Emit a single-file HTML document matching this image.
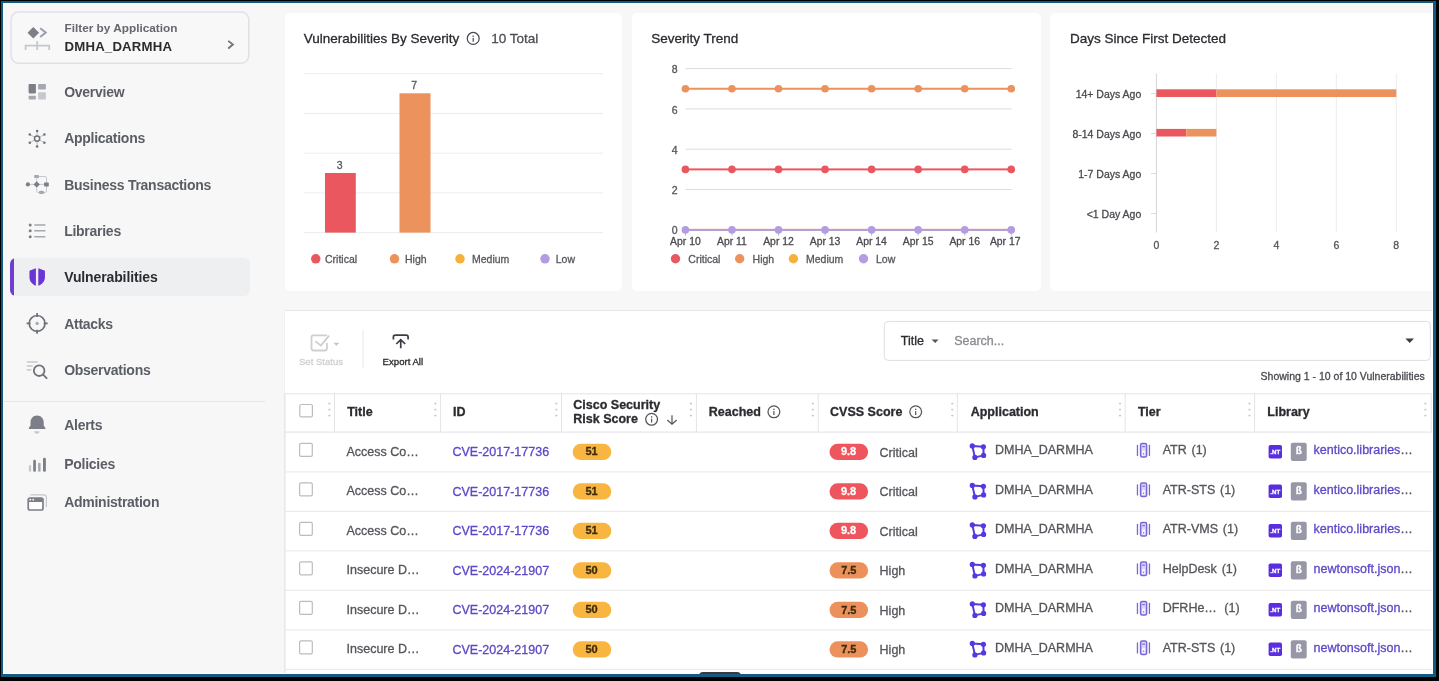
<!DOCTYPE html>
<html>
<head>
<meta charset="utf-8">
<title>Vulnerabilities</title>
<style>
*{box-sizing:border-box;margin:0;padding:0}
html,body{width:1439px;height:681px;overflow:hidden;background:#f7f7f7;font-family:"Liberation Sans",sans-serif;color:#2b2b30}
.abs{position:absolute}
#root{position:absolute;left:0;top:0;width:1439px;height:681px;overflow:hidden;will-change:transform}
/* frame */
.fr{position:absolute;z-index:50}
/* sidebar */
.filter{position:absolute;left:11px;top:12px;width:238px;height:51px;border-radius:8px;background:#f8f8f8}
.filter .l1{position:absolute;left:53.5px;top:10.4px;font-size:11.8px;font-weight:bold;color:#66666c;white-space:nowrap;line-height:13px}
.filter .l2{position:absolute;left:53.5px;top:26.8px;font-size:13.2px;letter-spacing:0.2px;font-weight:bold;color:#2b2b30;white-space:nowrap;line-height:16px}
.nav{position:absolute;left:64.2px;font-size:14px;font-weight:bold;color:#5b5e65;white-space:nowrap;line-height:16px;letter-spacing:-0.27px}
.nav.act{color:#2b2b30;letter-spacing:-0.12px}
.navbg{position:absolute;left:10px;top:258px;width:240px;height:38px;background:#eeeff1;border-radius:6px;overflow:hidden}
.navbg i{position:absolute;left:0;top:0;width:4px;height:100%;background:#6f3fd0}
.sep{position:absolute;left:3px;top:400.5px;width:262px;height:1px;background:#e6e6e8}
.ico{position:absolute}
/* cards */
.card{position:absolute;top:13px;height:278px;background:#fff;border-radius:5px}
.ctitle{position:absolute;top:31px;font-size:13.5px;color:#2b2b30;white-space:nowrap;line-height:16px}
.t105{font-size:10.5px;color:#55555a;white-space:nowrap;line-height:12px;position:absolute}
.dot{position:absolute;width:9.5px;height:9.5px;border-radius:50%}
svg text{stroke-width:0.3px}
</style>
</head>
<body>
<div id="root">

<!-- SIDEBAR -->
<div class="filter">
  <div class="l1">Filter by Application</div>
  <div class="l2">DMHA_DARMHA</div>
</div>
<div class="navbg"><i></i></div>
<div class="nav" style="top:84.15px">Overview</div>
<div class="nav" style="top:130.45px">Applications</div>
<div class="nav" style="top:176.75px">Business Transactions</div>
<div class="nav" style="top:223.05px">Libraries</div>
<div class="nav act" style="top:269.35px">Vulnerabilities</div>
<div class="nav" style="top:315.65px">Attacks</div>
<div class="nav" style="top:361.95px">Observations</div>
<div class="sep"></div>
<div class="nav" style="top:417.35px">Alerts</div>
<div class="nav" style="top:455.85px">Policies</div>
<div class="nav" style="top:494.35px">Administration</div>

<!-- SIDEBAR ICONS -->
<svg class="abs" style="left:0;top:0" width="270" height="681" viewBox="0 0 270 681">
<rect x="11.05" y="12.05" width="237.7" height="51.2" rx="7.5" fill="none" stroke="#e1e1e4" stroke-width="1.5"/>
<path d="M33.3 26.9l5.8 5.8-5.8 5.8-5.8-5.8z" fill="#7c7f88"/>
<path d="M40.2 28.2l5.5 4.3-5.5 4.5" fill="none" stroke="#9c9ea6" stroke-width="2"/>
<path d="M25.6 50v-4.4h23.6V50M37.2 41.2V50" fill="none" stroke="#c6c8cd" stroke-width="1.8"/>
<path d="M228.2 40.9l4.7 3.6-4.7 4" fill="none" stroke="#70737c" stroke-width="1.8"/>
<rect x="28.6" y="84" width="7.3" height="9.4" rx="0.8" fill="#7c7f88"/><rect x="38.1" y="84" width="7.8" height="5.6" rx="0.8" fill="#a6a8b0"/><rect x="28.6" y="95.8" width="7.3" height="3.8" rx="0.8" fill="#a6a8b0"/><rect x="38.1" y="92.3" width="7.8" height="7.3" rx="0.8" fill="#c6c8cd"/>
<line x1="37.1" y1="138.6" x2="37.1" y2="130.9" stroke="#b4b6bc" stroke-width="0.9"/><line x1="37.1" y1="138.6" x2="44.4" y2="134.5" stroke="#b4b6bc" stroke-width="0.9"/><line x1="37.1" y1="138.6" x2="44.4" y2="142.7" stroke="#b4b6bc" stroke-width="0.9"/><line x1="37.1" y1="138.6" x2="37.1" y2="146.4" stroke="#b4b6bc" stroke-width="0.9"/><line x1="37.1" y1="138.6" x2="29.8" y2="142.7" stroke="#b4b6bc" stroke-width="0.9"/><line x1="37.1" y1="138.6" x2="29.8" y2="134.5" stroke="#b4b6bc" stroke-width="0.9"/><circle cx="37.1" cy="138.6" r="2.6" fill="#f7f7f7" stroke="#6e717a" stroke-width="1.5"/><circle cx="37.1" cy="130.9" r="1.25" fill="#6e717a"/><circle cx="44.4" cy="134.5" r="1.25" fill="#6e717a"/><circle cx="44.4" cy="142.7" r="1.25" fill="#6e717a"/><circle cx="37.1" cy="146.4" r="1.25" fill="#6e717a"/><circle cx="29.8" cy="142.7" r="1.25" fill="#6e717a"/><circle cx="29.8" cy="134.5" r="1.25" fill="#6e717a"/>
<path d="M38.8 176.5h6.2a1.5 1.5 0 0 1 1.5 1.5v13a1.5 1.5 0 0 1-1.5 1.5h-6.8a1.5 1.5 0 0 1-1.5-1.5v-13.5M28 184.4h18" fill="none" stroke="#c6c8cd" stroke-width="1"/><circle cx="27.9" cy="184.4" r="2.1" fill="#7c7f88"/><path d="M36.7 181.2l3.2 3.2-3.2 3.2-3.2-3.2z" fill="#7c7f88"/><rect x="44.1" y="182.4" width="4.7" height="4" rx="0.6" fill="#7c7f88"/><rect x="34.2" y="174.9" width="4.7" height="3.2" rx="0.6" fill="#a6a8b0"/><rect x="38.8" y="190.7" width="5.3" height="3.3" rx="1.6" fill="#a6a8b0"/>
<circle cx="30.2" cy="225" r="1.5" fill="#7c7f88"/><rect x="34.1" y="224.25" width="11.5" height="1.5" rx="0.7" fill="#a6a8b0"/><circle cx="30.2" cy="230.85" r="1.5" fill="#7c7f88"/><rect x="34.1" y="230.1" width="11.5" height="1.5" rx="0.7" fill="#a6a8b0"/><circle cx="30.2" cy="236.7" r="1.5" fill="#7c7f88"/><rect x="34.1" y="235.95" width="11.5" height="1.5" rx="0.7" fill="#a6a8b0"/>
<path d="M35.9 268.2v17.6c-3.6-1.3-6.45-4.6-6.45-8.6v-6.5z" fill="#6b35d6"/><path d="M38.3 268.2v17.6c3.6-1.3 6.65-4.6 6.65-8.6v-6.5z" fill="#6b35d6"/>
<circle cx="37.1" cy="323.4" r="7.9" fill="none" stroke="#6e717a" stroke-width="1.7"/><path d="M37.1 313v4.1M37.1 329.8v4M26.6 323.4h4M43.6 323.4h4.1" stroke="#6e717a" stroke-width="1.7" fill="none"/><circle cx="37.1" cy="323.4" r="1.6" fill="#a6a8b0"/>
<rect x="26.8" y="361.2" width="10.9" height="1.5" fill="#c6c8cd"/><rect x="26.8" y="365.2" width="5.9" height="1.5" fill="#c6c8cd"/><rect x="26.8" y="369.1" width="4.4" height="1.5" fill="#c6c8cd"/><circle cx="39.15" cy="370.7" r="5.3" fill="none" stroke="#6e717a" stroke-width="1.8"/><path d="M43.1 374.7l3.5 3.5" stroke="#6e717a" stroke-width="1.9" stroke-linecap="round"/>
<path d="M37.1 415.4c3.8 0 6.6 2.9 6.6 6.6v3.5l1.7 2.6v0.9H28.8v-0.9l1.7-2.6V422c0-3.7 2.8-6.6 6.6-6.6z" fill="#7c7f88"/><path d="M34.4 431.2h5a2.5 2.5 0 0 1-5 0z" fill="#c6c8cd"/>
<rect x="28.9" y="465" width="2.2" height="6.8" rx="1.1" fill="#c6c8cd"/><rect x="33.2" y="459.7" width="2.7" height="12.1" rx="1.3" fill="#7c7f88"/><rect x="38.1" y="462.7" width="2.5" height="9.1" rx="1.2" fill="#a6a8b0"/><rect x="43" y="457.7" width="2.9" height="14.1" rx="1.4" fill="#7c7f88"/>
<path d="M30.5 494.8h13.3a2.6 2.6 0 0 1 2.6 2.6v9.9" fill="none" stroke="#c6c8cd" stroke-width="1.2"/><rect x="28.25" y="498" width="14.75" height="12" rx="1.8" fill="#fff" stroke="#7c7f88" stroke-width="1.7"/><rect x="28.25" y="498" width="14.75" height="4" fill="#7c7f88"/><circle cx="30.3" cy="499.7" r="0.9" fill="#fff"/><circle cx="33.3" cy="499.7" r="0.9" fill="#fff"/>
</svg>

<!-- CARD 1 -->
<div class="card" id="c1" style="left:284.5px;width:337.5px"></div>
<!-- CARD 2 -->
<div class="card" id="c2" style="left:631.5px;width:409.5px"></div>
<!-- CARD 3 -->
<div class="card" id="c3" style="left:1050px;width:400px"></div>

<!-- CHARTS -->
<svg class="abs" style="left:0;top:0" width="1439" height="681" viewBox="0 0 1439 681" font-family="Liberation Sans, sans-serif">
<g id="card1">
<text x="303.7" y="43.4" font-size="13.5" fill="#2b2b30" stroke="#2b2b30">Vulnerabilities By Severity</text>
<circle cx="473.2" cy="38.4" r="5.95" fill="none" stroke="#4a4a50" stroke-width="1.25"/><rect x="472.6" y="37.9" width="1.2" height="3.8" fill="#4a4a50"/><rect x="472.55" y="35.6" width="1.3" height="1.3" fill="#4a4a50"/>
<text x="491.2" y="43.4" font-size="13.5" fill="#4e4e54" stroke="#4e4e54">10 Total</text>
<rect x="303.7" y="73.25" width="299.3" height="1" fill="#ededee"/>
<rect x="303.7" y="112.95" width="299.3" height="1" fill="#ededee"/>
<rect x="303.7" y="152.65" width="299.3" height="1" fill="#ededee"/>
<rect x="303.7" y="192.35" width="299.3" height="1" fill="#ededee"/>
<rect x="303.7" y="232.05" width="299.3" height="1" fill="#ededee"/>
<rect x="325" y="173" width="30.8" height="59.6" fill="#eb575e"/>
<rect x="399.5" y="93.3" width="31" height="139.3" fill="#ec925d"/>
<text x="339.6" y="168.8" font-size="10.5" fill="#55555a" text-anchor="middle" stroke="#55555a">3</text>
<text x="414.1" y="88.8" font-size="10.5" fill="#55555a" text-anchor="middle" stroke="#55555a">7</text>
<circle cx="315.75" cy="258.8" r="4.75" fill="#eb575e"/><text x="325" y="262.6" font-size="10.5" fill="#57575d" stroke="#57575d">Critical</text>
<circle cx="394.5" cy="258.8" r="4.75" fill="#ec925d"/><text x="405" y="262.6" font-size="10.5" fill="#57575d" stroke="#57575d">High</text>
<circle cx="460" cy="258.8" r="4.75" fill="#f7b03c"/><text x="472" y="262.6" font-size="10.5" fill="#57575d" stroke="#57575d">Medium</text>
<circle cx="545" cy="258.8" r="4.75" fill="#b49ce2"/><text x="555.75" y="262.6" font-size="10.5" fill="#57575d" stroke="#57575d">Low</text>
</g>
<g id="card2">
<rect x="684.90" y="230" width="1" height="5.7" fill="#bcbcc6"/><rect x="731.45" y="230" width="1" height="5.7" fill="#bcbcc6"/><rect x="778.00" y="230" width="1" height="5.7" fill="#bcbcc6"/><rect x="824.55" y="230" width="1" height="5.7" fill="#bcbcc6"/><rect x="871.10" y="230" width="1" height="5.7" fill="#bcbcc6"/><rect x="917.65" y="230" width="1" height="5.7" fill="#bcbcc6"/><rect x="964.20" y="230" width="1" height="5.7" fill="#bcbcc6"/><rect x="1010.75" y="230" width="1" height="5.7" fill="#bcbcc6"/>
<text x="651.3" y="43.4" font-size="13.5" fill="#2b2b30" stroke="#2b2b30">Severity Trend</text>
<rect x="685.4" y="68.10" width="326.2" height="1" fill="#dcdcde"/>
<text x="677.6" y="73.20" font-size="10.5" fill="#55555a" text-anchor="end" stroke="#55555a">8</text>
<rect x="685.4" y="108.40" width="326.2" height="1" fill="#dcdcde"/>
<text x="677.6" y="113.50" font-size="10.5" fill="#55555a" text-anchor="end" stroke="#55555a">6</text>
<rect x="685.4" y="148.70" width="326.2" height="1" fill="#dcdcde"/>
<text x="677.6" y="153.80" font-size="10.5" fill="#55555a" text-anchor="end" stroke="#55555a">4</text>
<rect x="685.4" y="189.00" width="326.2" height="1" fill="#dcdcde"/>
<text x="677.6" y="194.10" font-size="10.5" fill="#55555a" text-anchor="end" stroke="#55555a">2</text>
<rect x="685.4" y="229.30" width="326.2" height="1" fill="#dcdcde"/>
<text x="677.6" y="234.40" font-size="10.5" fill="#55555a" text-anchor="end" stroke="#55555a">0</text>
<rect x="685.4" y="87.75" width="325.85" height="2" fill="#ec925d"/>
<circle cx="685.40" cy="88.75" r="3.8" fill="#ec925d"/>
<circle cx="731.95" cy="88.75" r="3.8" fill="#ec925d"/>
<circle cx="778.50" cy="88.75" r="3.8" fill="#ec925d"/>
<circle cx="825.05" cy="88.75" r="3.8" fill="#ec925d"/>
<circle cx="871.60" cy="88.75" r="3.8" fill="#ec925d"/>
<circle cx="918.15" cy="88.75" r="3.8" fill="#ec925d"/>
<circle cx="964.70" cy="88.75" r="3.8" fill="#ec925d"/>
<circle cx="1011.25" cy="88.75" r="3.8" fill="#ec925d"/>
<rect x="685.4" y="168.40" width="325.85" height="2" fill="#eb575e"/>
<circle cx="685.40" cy="169.4" r="3.8" fill="#eb575e"/>
<circle cx="731.95" cy="169.4" r="3.8" fill="#eb575e"/>
<circle cx="778.50" cy="169.4" r="3.8" fill="#eb575e"/>
<circle cx="825.05" cy="169.4" r="3.8" fill="#eb575e"/>
<circle cx="871.60" cy="169.4" r="3.8" fill="#eb575e"/>
<circle cx="918.15" cy="169.4" r="3.8" fill="#eb575e"/>
<circle cx="964.70" cy="169.4" r="3.8" fill="#eb575e"/>
<circle cx="1011.25" cy="169.4" r="3.8" fill="#eb575e"/>
<rect x="685.4" y="228.90" width="325.85" height="2" fill="#f7b03c"/>
<circle cx="685.40" cy="229.9" r="2.8" fill="#f7b03c"/>
<circle cx="731.95" cy="229.9" r="2.8" fill="#f7b03c"/>
<circle cx="778.50" cy="229.9" r="2.8" fill="#f7b03c"/>
<circle cx="825.05" cy="229.9" r="2.8" fill="#f7b03c"/>
<circle cx="871.60" cy="229.9" r="2.8" fill="#f7b03c"/>
<circle cx="918.15" cy="229.9" r="2.8" fill="#f7b03c"/>
<circle cx="964.70" cy="229.9" r="2.8" fill="#f7b03c"/>
<circle cx="1011.25" cy="229.9" r="2.8" fill="#f7b03c"/>
<rect x="685.4" y="228.90" width="325.85" height="2" fill="#b49ce2"/>
<circle cx="685.40" cy="229.9" r="3.8" fill="#b49ce2"/>
<circle cx="731.95" cy="229.9" r="3.8" fill="#b49ce2"/>
<circle cx="778.50" cy="229.9" r="3.8" fill="#b49ce2"/>
<circle cx="825.05" cy="229.9" r="3.8" fill="#b49ce2"/>
<circle cx="871.60" cy="229.9" r="3.8" fill="#b49ce2"/>
<circle cx="918.15" cy="229.9" r="3.8" fill="#b49ce2"/>
<circle cx="964.70" cy="229.9" r="3.8" fill="#b49ce2"/>
<circle cx="1011.25" cy="229.9" r="3.8" fill="#b49ce2"/>
<text x="685.40" y="245" font-size="10.4" fill="#4a4a50" text-anchor="middle" stroke="#4a4a50">Apr 10</text>
<text x="731.95" y="245" font-size="10.4" fill="#4a4a50" text-anchor="middle" stroke="#4a4a50">Apr 11</text>
<text x="778.50" y="245" font-size="10.4" fill="#4a4a50" text-anchor="middle" stroke="#4a4a50">Apr 12</text>
<text x="825.05" y="245" font-size="10.4" fill="#4a4a50" text-anchor="middle" stroke="#4a4a50">Apr 13</text>
<text x="871.60" y="245" font-size="10.4" fill="#4a4a50" text-anchor="middle" stroke="#4a4a50">Apr 14</text>
<text x="918.15" y="245" font-size="10.4" fill="#4a4a50" text-anchor="middle" stroke="#4a4a50">Apr 15</text>
<text x="964.70" y="245" font-size="10.4" fill="#4a4a50" text-anchor="middle" stroke="#4a4a50">Apr 16</text>
<text x="1005.20" y="245" font-size="10.4" fill="#4a4a50" text-anchor="middle" stroke="#4a4a50">Apr 17</text>
<circle cx="675.5" cy="258.8" r="4.7" fill="#eb575e"/><text x="688.3" y="262.6" font-size="10.5" fill="#57575d" stroke="#57575d">Critical</text>
<circle cx="739.7" cy="258.8" r="4.7" fill="#ec925d"/><text x="752.6" y="262.6" font-size="10.5" fill="#57575d" stroke="#57575d">High</text>
<circle cx="793.4" cy="258.8" r="4.7" fill="#f7b03c"/><text x="806" y="262.6" font-size="10.5" fill="#57575d" stroke="#57575d">Medium</text>
<circle cx="863.5" cy="258.8" r="4.7" fill="#b49ce2"/><text x="876" y="262.6" font-size="10.5" fill="#57575d" stroke="#57575d">Low</text>
</g>
<g id="card3">
<text x="1070" y="43.4" font-size="13.5" fill="#2b2b30" stroke="#2b2b30">Days Since First Detected</text>
<rect x="1155.90" y="73.5" width="1" height="159" fill="#d4d4d6"/>
<text x="1156.40" y="248.6" font-size="10.5" fill="#55555a" text-anchor="middle" stroke="#55555a">0</text>
<rect x="1215.87" y="73.5" width="1" height="159" fill="#ececed"/>
<text x="1216.37" y="248.6" font-size="10.5" fill="#55555a" text-anchor="middle" stroke="#55555a">2</text>
<rect x="1275.84" y="73.5" width="1" height="159" fill="#ececed"/>
<text x="1276.34" y="248.6" font-size="10.5" fill="#55555a" text-anchor="middle" stroke="#55555a">4</text>
<rect x="1335.81" y="73.5" width="1" height="159" fill="#ececed"/>
<text x="1336.31" y="248.6" font-size="10.5" fill="#55555a" text-anchor="middle" stroke="#55555a">6</text>
<rect x="1395.78" y="73.5" width="1" height="159" fill="#ececed"/>
<text x="1396.28" y="248.6" font-size="10.5" fill="#55555a" text-anchor="middle" stroke="#55555a">8</text>
<rect x="1151" y="93.0" width="5" height="1" fill="#dcdcde"/>
<text x="1141.3" y="97.60" font-size="10.5" fill="#4a4a50" text-anchor="end" stroke="#4a4a50">14+ Days Ago</text>
<rect x="1151" y="133.0" width="5" height="1" fill="#dcdcde"/>
<text x="1141.3" y="137.60" font-size="10.5" fill="#4a4a50" text-anchor="end" stroke="#4a4a50">8-14 Days Ago</text>
<rect x="1151" y="173.0" width="5" height="1" fill="#dcdcde"/>
<text x="1141.3" y="177.60" font-size="10.5" fill="#4a4a50" text-anchor="end" stroke="#4a4a50">1-7 Days Ago</text>
<rect x="1151" y="213.0" width="5" height="1" fill="#dcdcde"/>
<text x="1141.3" y="217.60" font-size="10.5" fill="#4a4a50" text-anchor="end" stroke="#4a4a50">&lt;1 Day Ago</text>
<rect x="1156.4" y="89.3" width="59.97" height="7.7" fill="#eb575e"/><rect x="1216.37" y="89.3" width="179.91" height="7.7" fill="#ec925d"/>
<rect x="1156.4" y="128.9" width="30" height="7.6" fill="#eb575e"/><rect x="1186.4" y="128.9" width="29.97" height="7.6" fill="#ec925d"/>
</g>
</svg>

<!-- TABLE PANEL -->
<div id="panel" class="abs" style="left:284px;top:310px;width:1160px;height:380px;background:#fff;border:1px solid #e7e7e8;border-left-color:#f0f0f1;border-radius:2px"></div>

<!-- TABLE CONTENT -->
<svg class="abs" style="left:0;top:0" width="1439" height="681" viewBox="0 0 1439 681" font-family="Liberation Sans, sans-serif">
<g id="toolbar">
<path d="M327.2 335.3H313.4a1.9 1.9 0 0 0-1.9 1.9v11.4a1.9 1.9 0 0 0 1.9 1.9h11.6a1.9 1.9 0 0 0 1.9-1.9V343" fill="none" stroke="#cfcfd2" stroke-width="1.8"/>
<path d="M315.5 341.3l5.3 4.3 8.3-10" fill="none" stroke="#cfcfd2" stroke-width="1.8" stroke-linejoin="round"/>
<path d="M333.3 342.7h6.2l-3.1 3z" fill="#c6c6c9"/>
<text x="298.9" y="364.7" font-size="9.6" fill="#d0d0d3" stroke="#d0d0d3">Set Status</text>
<rect x="362.6" y="330.3" width="1" height="37.6" fill="#e6e6e8"/>
<path d="M393.4 339.4v-2.4a1.9 1.9 0 0 1 1.9-1.9h10.9a1.9 1.9 0 0 1 1.9 1.9v2.4" fill="none" stroke="#3c3c44" stroke-width="1.7"/>
<path d="M400.75 348.2v-8.4M396.3 344l4.45-4.4 4.45 4.4" fill="none" stroke="#3c3c44" stroke-width="1.7"/>
<text x="382.6" y="364.7" font-size="9.6" fill="#2b2b30" stroke="#2b2b30">Export All</text>
</g>
<g id="search">
<rect x="884.3" y="321.4" width="546" height="39" rx="4" fill="#fff" stroke="#dedee0" stroke-width="1"/>
<text x="900.8" y="344.6" font-size="12.5" fill="#2b2b30" stroke="#2b2b30">Title</text>
<path d="M931.6 339.4h7l-3.5 3.6z" fill="#55555a"/>
<text x="954.2" y="344.6" font-size="12.5" fill="#8a8a90" stroke="#8a8a90">Search...</text>
<path d="M1405.4 338.6h8.6l-4.3 4.4z" fill="#3c3c44"/>
<text x="1424.8" y="379.8" font-size="10.5" fill="#4a4a50" text-anchor="end" stroke="#4a4a50">Showing 1 - 10 of 10 Vulnerabilities</text>
</g>
<g id="thead">
<rect x="284" y="393.3" width="1.6" height="282" fill="#e8e8ea"/>
<rect x="284.5" y="393.3" width="1147" height="1" fill="#e4e4e6"/>
<rect x="284.5" y="431.5" width="1147" height="1.2" fill="#e6e6e8"/>
<rect x="334.0" y="393.3" width="1" height="39" fill="#e4e4e6"/>
<rect x="440.1" y="393.3" width="1" height="39" fill="#e4e4e6"/>
<rect x="561.0" y="393.3" width="1" height="39" fill="#e4e4e6"/>
<rect x="695.9" y="393.3" width="1" height="39" fill="#e4e4e6"/>
<rect x="817.7" y="393.3" width="1" height="39" fill="#e4e4e6"/>
<rect x="956.8" y="393.3" width="1" height="39" fill="#e4e4e6"/>
<rect x="1124.7" y="393.3" width="1" height="39" fill="#e4e4e6"/>
<rect x="1254.1" y="393.3" width="1" height="39" fill="#e4e4e6"/>
<rect x="1430.7" y="393.3" width="1" height="39" fill="#e4e4e6"/>
<rect x="328.2" y="402.8" width="2.4" height="1.6" rx="0.8" fill="#c9c9cc"/><rect x="328.2" y="408.8" width="2.4" height="1.6" rx="0.8" fill="#c9c9cc"/><rect x="328.2" y="414.8" width="2.4" height="1.6" rx="0.8" fill="#c9c9cc"/>
<rect x="434.2" y="402.8" width="2.4" height="1.6" rx="0.8" fill="#c9c9cc"/><rect x="434.2" y="408.8" width="2.4" height="1.6" rx="0.8" fill="#c9c9cc"/><rect x="434.2" y="414.8" width="2.4" height="1.6" rx="0.8" fill="#c9c9cc"/>
<rect x="555.0999999999999" y="402.8" width="2.4" height="1.6" rx="0.8" fill="#c9c9cc"/><rect x="555.0999999999999" y="408.8" width="2.4" height="1.6" rx="0.8" fill="#c9c9cc"/><rect x="555.0999999999999" y="414.8" width="2.4" height="1.6" rx="0.8" fill="#c9c9cc"/>
<rect x="689.6999999999999" y="402.8" width="2.4" height="1.6" rx="0.8" fill="#c9c9cc"/><rect x="689.6999999999999" y="408.8" width="2.4" height="1.6" rx="0.8" fill="#c9c9cc"/><rect x="689.6999999999999" y="414.8" width="2.4" height="1.6" rx="0.8" fill="#c9c9cc"/>
<rect x="811.5999999999999" y="402.8" width="2.4" height="1.6" rx="0.8" fill="#c9c9cc"/><rect x="811.5999999999999" y="408.8" width="2.4" height="1.6" rx="0.8" fill="#c9c9cc"/><rect x="811.5999999999999" y="414.8" width="2.4" height="1.6" rx="0.8" fill="#c9c9cc"/>
<rect x="951.0999999999999" y="402.8" width="2.4" height="1.6" rx="0.8" fill="#c9c9cc"/><rect x="951.0999999999999" y="408.8" width="2.4" height="1.6" rx="0.8" fill="#c9c9cc"/><rect x="951.0999999999999" y="414.8" width="2.4" height="1.6" rx="0.8" fill="#c9c9cc"/>
<rect x="1118.8" y="402.8" width="2.4" height="1.6" rx="0.8" fill="#c9c9cc"/><rect x="1118.8" y="408.8" width="2.4" height="1.6" rx="0.8" fill="#c9c9cc"/><rect x="1118.8" y="414.8" width="2.4" height="1.6" rx="0.8" fill="#c9c9cc"/>
<rect x="1248.3" y="402.8" width="2.4" height="1.6" rx="0.8" fill="#c9c9cc"/><rect x="1248.3" y="408.8" width="2.4" height="1.6" rx="0.8" fill="#c9c9cc"/><rect x="1248.3" y="414.8" width="2.4" height="1.6" rx="0.8" fill="#c9c9cc"/>
<rect x="1424.2" y="402.8" width="2.4" height="1.6" rx="0.8" fill="#c9c9cc"/><rect x="1424.2" y="408.8" width="2.4" height="1.6" rx="0.8" fill="#c9c9cc"/><rect x="1424.2" y="414.8" width="2.4" height="1.6" rx="0.8" fill="#c9c9cc"/>
<rect x="299.8" y="404.5" width="12.6" height="12.3" rx="1.4" fill="#fff" stroke="#bcbcc0" stroke-width="1.2"/>
<text x="347.2" y="416.3" font-size="12.5" font-weight="bold" fill="#2b2b30" stroke="#2b2b30">Title</text>
<text x="453" y="416.3" font-size="12.5" font-weight="bold" fill="#2b2b30" stroke="#2b2b30">ID</text>
<text x="573.3" y="408.7" font-size="12.5" font-weight="bold" fill="#2b2b30" stroke="#2b2b30">Cisco Security</text>
<text x="573.3" y="423.2" font-size="12.5" font-weight="bold" fill="#2b2b30" stroke="#2b2b30">Risk Score</text>
<circle cx="651.6" cy="419.3" r="5.9" fill="none" stroke="#55555a" stroke-width="1.25"/><rect x="651.00" y="418.60" width="1.2" height="3.9" fill="#55555a"/><rect x="650.95" y="416.20" width="1.3" height="1.3" fill="#55555a"/>
<path d="M672 415.3v8.6M667.3 420l4.7 4.2 4.7-4.2" fill="none" stroke="#55555a" stroke-width="1.2"/>
<text x="708.8" y="416.1" font-size="12.5" font-weight="bold" fill="#2b2b30" stroke="#2b2b30">Reached</text>
<circle cx="773.9" cy="411.8" r="5.9" fill="none" stroke="#55555a" stroke-width="1.25"/><rect x="773.30" y="411.10" width="1.2" height="3.9" fill="#55555a"/><rect x="773.25" y="408.70" width="1.3" height="1.3" fill="#55555a"/>
<text x="830.1" y="415.9" font-size="12.5" font-weight="bold" fill="#2b2b30" stroke="#2b2b30">CVSS Score</text>
<circle cx="915.7" cy="411.8" r="5.9" fill="none" stroke="#55555a" stroke-width="1.25"/><rect x="915.10" y="411.10" width="1.2" height="3.9" fill="#55555a"/><rect x="915.05" y="408.70" width="1.3" height="1.3" fill="#55555a"/>
<text x="970.7" y="416.1" font-size="12.5" font-weight="bold" fill="#2b2b30" stroke="#2b2b30">Application</text>
<text x="1137.9" y="416.1" font-size="12.5" font-weight="bold" fill="#2b2b30" stroke="#2b2b30">Tier</text>
<text x="1267.3" y="416.1" font-size="12.5" font-weight="bold" fill="#2b2b30" stroke="#2b2b30">Library</text>
</g>
<g id="tbody">
<g transform="translate(0,0.0)">
<rect x="284.5" y="471.3" width="1147" height="1.2" fill="#ebebed"/>
<rect x="299.6" y="443.4" width="12.7" height="13" rx="1.4" fill="#fff" stroke="#bcbcc0" stroke-width="1.2"/>
<text x="346.5" y="455.8" font-size="12.5" fill="#55555b" stroke="#55555b">Access Co…</text>
<text x="452.5" y="456" font-size="12.5" fill="#5c48c9" stroke="#5c48c9">CVE-2017-17736</text>
<rect x="572.7" y="443.8" width="38.6" height="16.3" rx="8.15" fill="#f8b53f"/>
<text x="591.5" y="455" font-size="11" fill="#3d2c0c" text-anchor="middle" font-weight="bold" stroke="#3d2c0c">51</text>
<rect x="829.5" y="443.8" width="38.6" height="16.3" rx="8.15" fill="#ee555d"/>
<text x="848.6" y="455.2" font-size="11" fill="#fff" text-anchor="middle" font-weight="bold" stroke="#fff">9.8</text>
<text x="879.6" y="456.8" font-size="12.5" fill="#55555b" stroke="#55555b">Critical</text>
<path d="M972.3 445.9L983.4 446.8L983.6 455.4L974.9 457.4Z" fill="none" stroke="#5538e0" stroke-width="2" stroke-linejoin="round"/><circle cx="972.3" cy="445.9" r="2.6" fill="#5538e0"/><circle cx="983.4" cy="446.8" r="2.6" fill="#5538e0"/><circle cx="983.6" cy="455.4" r="2.6" fill="#5538e0"/><circle cx="974.9" cy="457.4" r="2.6" fill="#5538e0"/>
<text x="995" y="454.4" font-size="12.5" fill="#55555b" stroke="#55555b">DMHA_DARMHA</text>
<rect x="1136.8" y="444.8" width="1.3" height="11.2" rx="0.6" fill="#7a66d6"/><rect x="1148.8" y="444.8" width="1.3" height="11.2" rx="0.6" fill="#7a66d6"/><rect x="1140.6" y="443.5" width="6" height="13.6" rx="1.6" fill="#dcd6f8" stroke="#7a66d6" stroke-width="1.5"/><rect x="1142.1" y="450.6" width="3" height="4.9" fill="#f6f4ff"/><rect x="1142.3" y="446" width="2.6" height="1.2" fill="#7a66d6"/><rect x="1143" y="453.2" width="1.2" height="1.2" fill="#7a66d6"/>
<text x="1162.7" y="454.4" font-size="12.5" fill="#55555b" stroke="#55555b">ATR</text>
<text x="1191.5" y="454.4" font-size="12.5" fill="#55555b" stroke="#55555b">(1)</text>
<rect x="1268.6" y="445" width="13.4" height="13.5" rx="1.8" fill="#5a2ee0"/><text x="1275.2" y="454.3" font-size="6.1" font-weight="bold" fill="#fff" text-anchor="middle" stroke="#fff">.NT</text><rect x="1290.8" y="442.8" width="15.9" height="18.1" rx="2" fill="#9797a8"/><text x="1298.8" y="454.4" font-size="10" font-weight="bold" fill="#fff" text-anchor="middle" stroke="#fff">ß</text>
<text x="1313.5" y="454.4" font-size="12.5" fill="#5c48c9" stroke="#5c48c9">kentico.libraries<tspan fill="#55555b" stroke="#55555b">…</tspan></text>
</g>
<g transform="translate(0,39.5)">
<rect x="284.5" y="471.3" width="1147" height="1.2" fill="#ebebed"/>
<rect x="299.6" y="443.4" width="12.7" height="13" rx="1.4" fill="#fff" stroke="#bcbcc0" stroke-width="1.2"/>
<text x="346.5" y="455.8" font-size="12.5" fill="#55555b" stroke="#55555b">Access Co…</text>
<text x="452.5" y="456" font-size="12.5" fill="#5c48c9" stroke="#5c48c9">CVE-2017-17736</text>
<rect x="572.7" y="443.8" width="38.6" height="16.3" rx="8.15" fill="#f8b53f"/>
<text x="591.5" y="455" font-size="11" fill="#3d2c0c" text-anchor="middle" font-weight="bold" stroke="#3d2c0c">51</text>
<rect x="829.5" y="443.8" width="38.6" height="16.3" rx="8.15" fill="#ee555d"/>
<text x="848.6" y="455.2" font-size="11" fill="#fff" text-anchor="middle" font-weight="bold" stroke="#fff">9.8</text>
<text x="879.6" y="456.8" font-size="12.5" fill="#55555b" stroke="#55555b">Critical</text>
<path d="M972.3 445.9L983.4 446.8L983.6 455.4L974.9 457.4Z" fill="none" stroke="#5538e0" stroke-width="2" stroke-linejoin="round"/><circle cx="972.3" cy="445.9" r="2.6" fill="#5538e0"/><circle cx="983.4" cy="446.8" r="2.6" fill="#5538e0"/><circle cx="983.6" cy="455.4" r="2.6" fill="#5538e0"/><circle cx="974.9" cy="457.4" r="2.6" fill="#5538e0"/>
<text x="995" y="454.4" font-size="12.5" fill="#55555b" stroke="#55555b">DMHA_DARMHA</text>
<rect x="1136.8" y="444.8" width="1.3" height="11.2" rx="0.6" fill="#7a66d6"/><rect x="1148.8" y="444.8" width="1.3" height="11.2" rx="0.6" fill="#7a66d6"/><rect x="1140.6" y="443.5" width="6" height="13.6" rx="1.6" fill="#dcd6f8" stroke="#7a66d6" stroke-width="1.5"/><rect x="1142.1" y="450.6" width="3" height="4.9" fill="#f6f4ff"/><rect x="1142.3" y="446" width="2.6" height="1.2" fill="#7a66d6"/><rect x="1143" y="453.2" width="1.2" height="1.2" fill="#7a66d6"/>
<text x="1162.7" y="454.4" font-size="12.5" fill="#55555b" stroke="#55555b">ATR-STS</text>
<text x="1220.0" y="454.4" font-size="12.5" fill="#55555b" stroke="#55555b">(1)</text>
<rect x="1268.6" y="445" width="13.4" height="13.5" rx="1.8" fill="#5a2ee0"/><text x="1275.2" y="454.3" font-size="6.1" font-weight="bold" fill="#fff" text-anchor="middle" stroke="#fff">.NT</text><rect x="1290.8" y="442.8" width="15.9" height="18.1" rx="2" fill="#9797a8"/><text x="1298.8" y="454.4" font-size="10" font-weight="bold" fill="#fff" text-anchor="middle" stroke="#fff">ß</text>
<text x="1313.5" y="454.4" font-size="12.5" fill="#5c48c9" stroke="#5c48c9">kentico.libraries<tspan fill="#55555b" stroke="#55555b">…</tspan></text>
</g>
<g transform="translate(0,79.0)">
<rect x="284.5" y="471.3" width="1147" height="1.2" fill="#ebebed"/>
<rect x="299.6" y="443.4" width="12.7" height="13" rx="1.4" fill="#fff" stroke="#bcbcc0" stroke-width="1.2"/>
<text x="346.5" y="455.8" font-size="12.5" fill="#55555b" stroke="#55555b">Access Co…</text>
<text x="452.5" y="456" font-size="12.5" fill="#5c48c9" stroke="#5c48c9">CVE-2017-17736</text>
<rect x="572.7" y="443.8" width="38.6" height="16.3" rx="8.15" fill="#f8b53f"/>
<text x="591.5" y="455" font-size="11" fill="#3d2c0c" text-anchor="middle" font-weight="bold" stroke="#3d2c0c">51</text>
<rect x="829.5" y="443.8" width="38.6" height="16.3" rx="8.15" fill="#ee555d"/>
<text x="848.6" y="455.2" font-size="11" fill="#fff" text-anchor="middle" font-weight="bold" stroke="#fff">9.8</text>
<text x="879.6" y="456.8" font-size="12.5" fill="#55555b" stroke="#55555b">Critical</text>
<path d="M972.3 445.9L983.4 446.8L983.6 455.4L974.9 457.4Z" fill="none" stroke="#5538e0" stroke-width="2" stroke-linejoin="round"/><circle cx="972.3" cy="445.9" r="2.6" fill="#5538e0"/><circle cx="983.4" cy="446.8" r="2.6" fill="#5538e0"/><circle cx="983.6" cy="455.4" r="2.6" fill="#5538e0"/><circle cx="974.9" cy="457.4" r="2.6" fill="#5538e0"/>
<text x="995" y="454.4" font-size="12.5" fill="#55555b" stroke="#55555b">DMHA_DARMHA</text>
<rect x="1136.8" y="444.8" width="1.3" height="11.2" rx="0.6" fill="#7a66d6"/><rect x="1148.8" y="444.8" width="1.3" height="11.2" rx="0.6" fill="#7a66d6"/><rect x="1140.6" y="443.5" width="6" height="13.6" rx="1.6" fill="#dcd6f8" stroke="#7a66d6" stroke-width="1.5"/><rect x="1142.1" y="450.6" width="3" height="4.9" fill="#f6f4ff"/><rect x="1142.3" y="446" width="2.6" height="1.2" fill="#7a66d6"/><rect x="1143" y="453.2" width="1.2" height="1.2" fill="#7a66d6"/>
<text x="1162.7" y="454.4" font-size="12.5" fill="#55555b" stroke="#55555b">ATR-VMS</text>
<text x="1222.8" y="454.4" font-size="12.5" fill="#55555b" stroke="#55555b">(1)</text>
<rect x="1268.6" y="445" width="13.4" height="13.5" rx="1.8" fill="#5a2ee0"/><text x="1275.2" y="454.3" font-size="6.1" font-weight="bold" fill="#fff" text-anchor="middle" stroke="#fff">.NT</text><rect x="1290.8" y="442.8" width="15.9" height="18.1" rx="2" fill="#9797a8"/><text x="1298.8" y="454.4" font-size="10" font-weight="bold" fill="#fff" text-anchor="middle" stroke="#fff">ß</text>
<text x="1313.5" y="454.4" font-size="12.5" fill="#5c48c9" stroke="#5c48c9">kentico.libraries<tspan fill="#55555b" stroke="#55555b">…</tspan></text>
</g>
<g transform="translate(0,118.5)">
<rect x="284.5" y="471.3" width="1147" height="1.2" fill="#ebebed"/>
<rect x="299.6" y="443.4" width="12.7" height="13" rx="1.4" fill="#fff" stroke="#bcbcc0" stroke-width="1.2"/>
<text x="346.5" y="455.8" font-size="12.5" fill="#55555b" stroke="#55555b">Insecure D…</text>
<text x="452.5" y="456" font-size="12.5" fill="#5c48c9" stroke="#5c48c9">CVE-2024-21907</text>
<rect x="572.7" y="443.8" width="38.6" height="16.3" rx="8.15" fill="#f8b53f"/>
<text x="591.5" y="455" font-size="11" fill="#3d2c0c" text-anchor="middle" font-weight="bold" stroke="#3d2c0c">50</text>
<rect x="829.5" y="443.8" width="38.6" height="16.3" rx="8.15" fill="#ec915c"/>
<text x="848.8" y="455.7" font-size="11" fill="#3d2c0c" text-anchor="middle" font-weight="bold" stroke="#3d2c0c">7.5</text>
<text x="879.6" y="456.8" font-size="12.5" fill="#55555b" stroke="#55555b">High</text>
<path d="M972.3 445.9L983.4 446.8L983.6 455.4L974.9 457.4Z" fill="none" stroke="#5538e0" stroke-width="2" stroke-linejoin="round"/><circle cx="972.3" cy="445.9" r="2.6" fill="#5538e0"/><circle cx="983.4" cy="446.8" r="2.6" fill="#5538e0"/><circle cx="983.6" cy="455.4" r="2.6" fill="#5538e0"/><circle cx="974.9" cy="457.4" r="2.6" fill="#5538e0"/>
<text x="995" y="454.4" font-size="12.5" fill="#55555b" stroke="#55555b">DMHA_DARMHA</text>
<rect x="1136.8" y="444.8" width="1.3" height="11.2" rx="0.6" fill="#7a66d6"/><rect x="1148.8" y="444.8" width="1.3" height="11.2" rx="0.6" fill="#7a66d6"/><rect x="1140.6" y="443.5" width="6" height="13.6" rx="1.6" fill="#dcd6f8" stroke="#7a66d6" stroke-width="1.5"/><rect x="1142.1" y="450.6" width="3" height="4.9" fill="#f6f4ff"/><rect x="1142.3" y="446" width="2.6" height="1.2" fill="#7a66d6"/><rect x="1143" y="453.2" width="1.2" height="1.2" fill="#7a66d6"/>
<text x="1162.7" y="454.4" font-size="12.5" fill="#55555b" stroke="#55555b">HelpDesk</text>
<text x="1221.7" y="454.4" font-size="12.5" fill="#55555b" stroke="#55555b">(1)</text>
<rect x="1268.6" y="445" width="13.4" height="13.5" rx="1.8" fill="#5a2ee0"/><text x="1275.2" y="454.3" font-size="6.1" font-weight="bold" fill="#fff" text-anchor="middle" stroke="#fff">.NT</text><rect x="1290.8" y="442.8" width="15.9" height="18.1" rx="2" fill="#9797a8"/><text x="1298.8" y="454.4" font-size="10" font-weight="bold" fill="#fff" text-anchor="middle" stroke="#fff">ß</text>
<text x="1313.5" y="454.4" font-size="12.5" fill="#5c48c9" stroke="#5c48c9">newtonsoft.json<tspan fill="#55555b" stroke="#55555b">…</tspan></text>
</g>
<g transform="translate(0,158.0)">
<rect x="284.5" y="471.3" width="1147" height="1.2" fill="#ebebed"/>
<rect x="299.6" y="443.4" width="12.7" height="13" rx="1.4" fill="#fff" stroke="#bcbcc0" stroke-width="1.2"/>
<text x="346.5" y="455.8" font-size="12.5" fill="#55555b" stroke="#55555b">Insecure D…</text>
<text x="452.5" y="456" font-size="12.5" fill="#5c48c9" stroke="#5c48c9">CVE-2024-21907</text>
<rect x="572.7" y="443.8" width="38.6" height="16.3" rx="8.15" fill="#f8b53f"/>
<text x="591.5" y="455" font-size="11" fill="#3d2c0c" text-anchor="middle" font-weight="bold" stroke="#3d2c0c">50</text>
<rect x="829.5" y="443.8" width="38.6" height="16.3" rx="8.15" fill="#ec915c"/>
<text x="848.8" y="455.7" font-size="11" fill="#3d2c0c" text-anchor="middle" font-weight="bold" stroke="#3d2c0c">7.5</text>
<text x="879.6" y="456.8" font-size="12.5" fill="#55555b" stroke="#55555b">High</text>
<path d="M972.3 445.9L983.4 446.8L983.6 455.4L974.9 457.4Z" fill="none" stroke="#5538e0" stroke-width="2" stroke-linejoin="round"/><circle cx="972.3" cy="445.9" r="2.6" fill="#5538e0"/><circle cx="983.4" cy="446.8" r="2.6" fill="#5538e0"/><circle cx="983.6" cy="455.4" r="2.6" fill="#5538e0"/><circle cx="974.9" cy="457.4" r="2.6" fill="#5538e0"/>
<text x="995" y="454.4" font-size="12.5" fill="#55555b" stroke="#55555b">DMHA_DARMHA</text>
<rect x="1136.8" y="444.8" width="1.3" height="11.2" rx="0.6" fill="#7a66d6"/><rect x="1148.8" y="444.8" width="1.3" height="11.2" rx="0.6" fill="#7a66d6"/><rect x="1140.6" y="443.5" width="6" height="13.6" rx="1.6" fill="#dcd6f8" stroke="#7a66d6" stroke-width="1.5"/><rect x="1142.1" y="450.6" width="3" height="4.9" fill="#f6f4ff"/><rect x="1142.3" y="446" width="2.6" height="1.2" fill="#7a66d6"/><rect x="1143" y="453.2" width="1.2" height="1.2" fill="#7a66d6"/>
<text x="1162.7" y="454.4" font-size="12.5" fill="#55555b" stroke="#55555b">DFRHe…</text>
<text x="1224.3" y="454.4" font-size="12.5" fill="#55555b" stroke="#55555b">(1)</text>
<rect x="1268.6" y="445" width="13.4" height="13.5" rx="1.8" fill="#5a2ee0"/><text x="1275.2" y="454.3" font-size="6.1" font-weight="bold" fill="#fff" text-anchor="middle" stroke="#fff">.NT</text><rect x="1290.8" y="442.8" width="15.9" height="18.1" rx="2" fill="#9797a8"/><text x="1298.8" y="454.4" font-size="10" font-weight="bold" fill="#fff" text-anchor="middle" stroke="#fff">ß</text>
<text x="1313.5" y="454.4" font-size="12.5" fill="#5c48c9" stroke="#5c48c9">newtonsoft.json<tspan fill="#55555b" stroke="#55555b">…</tspan></text>
</g>
<g transform="translate(0,197.5)">
<rect x="284.5" y="471.3" width="1147" height="1.2" fill="#ebebed"/>
<rect x="299.6" y="443.4" width="12.7" height="13" rx="1.4" fill="#fff" stroke="#bcbcc0" stroke-width="1.2"/>
<text x="346.5" y="455.8" font-size="12.5" fill="#55555b" stroke="#55555b">Insecure D…</text>
<text x="452.5" y="456" font-size="12.5" fill="#5c48c9" stroke="#5c48c9">CVE-2024-21907</text>
<rect x="572.7" y="443.8" width="38.6" height="16.3" rx="8.15" fill="#f8b53f"/>
<text x="591.5" y="455" font-size="11" fill="#3d2c0c" text-anchor="middle" font-weight="bold" stroke="#3d2c0c">50</text>
<rect x="829.5" y="443.8" width="38.6" height="16.3" rx="8.15" fill="#ec915c"/>
<text x="848.8" y="455.7" font-size="11" fill="#3d2c0c" text-anchor="middle" font-weight="bold" stroke="#3d2c0c">7.5</text>
<text x="879.6" y="456.8" font-size="12.5" fill="#55555b" stroke="#55555b">High</text>
<path d="M972.3 445.9L983.4 446.8L983.6 455.4L974.9 457.4Z" fill="none" stroke="#5538e0" stroke-width="2" stroke-linejoin="round"/><circle cx="972.3" cy="445.9" r="2.6" fill="#5538e0"/><circle cx="983.4" cy="446.8" r="2.6" fill="#5538e0"/><circle cx="983.6" cy="455.4" r="2.6" fill="#5538e0"/><circle cx="974.9" cy="457.4" r="2.6" fill="#5538e0"/>
<text x="995" y="454.4" font-size="12.5" fill="#55555b" stroke="#55555b">DMHA_DARMHA</text>
<rect x="1136.8" y="444.8" width="1.3" height="11.2" rx="0.6" fill="#7a66d6"/><rect x="1148.8" y="444.8" width="1.3" height="11.2" rx="0.6" fill="#7a66d6"/><rect x="1140.6" y="443.5" width="6" height="13.6" rx="1.6" fill="#dcd6f8" stroke="#7a66d6" stroke-width="1.5"/><rect x="1142.1" y="450.6" width="3" height="4.9" fill="#f6f4ff"/><rect x="1142.3" y="446" width="2.6" height="1.2" fill="#7a66d6"/><rect x="1143" y="453.2" width="1.2" height="1.2" fill="#7a66d6"/>
<text x="1162.7" y="454.4" font-size="12.5" fill="#55555b" stroke="#55555b">ATR-STS</text>
<text x="1220.0" y="454.4" font-size="12.5" fill="#55555b" stroke="#55555b">(1)</text>
<rect x="1268.6" y="445" width="13.4" height="13.5" rx="1.8" fill="#5a2ee0"/><text x="1275.2" y="454.3" font-size="6.1" font-weight="bold" fill="#fff" text-anchor="middle" stroke="#fff">.NT</text><rect x="1290.8" y="442.8" width="15.9" height="18.1" rx="2" fill="#9797a8"/><text x="1298.8" y="454.4" font-size="10" font-weight="bold" fill="#fff" text-anchor="middle" stroke="#fff">ß</text>
<text x="1313.5" y="454.4" font-size="12.5" fill="#5c48c9" stroke="#5c48c9">newtonsoft.json<tspan fill="#55555b" stroke="#55555b">…</tspan></text>
</g>
</g>
</svg>

<!-- FRAME -->
<div class="fr" style="left:3px;top:3px;width:1430px;height:1.2px;background:#fff"></div>
<div class="fr" style="left:3px;top:3px;width:1.2px;height:671px;background:#fff"></div>
<div class="fr" style="left:1431.7px;top:3px;width:1.3px;height:671px;background:#fff"></div>
<div class="fr" style="left:3px;top:672.8px;width:1430px;height:1.2px;background:#fff"></div>
<div class="fr" style="left:698.5px;top:671.7px;width:42px;height:8px;border-radius:4px;background:#3a3a3c"></div>
<div class="fr" style="left:0;top:0;width:1439px;height:3px;background:#115a80"></div>
<div class="fr" style="left:0;top:0;width:3px;height:681px;background:#115a80"></div>
<div class="fr" style="left:1432.8px;top:0;width:6.2px;height:681px;background:#115a80"></div>
<div class="fr" style="left:0;top:673.9px;width:1439px;height:7.1px;background:#115a80"></div>
<div class="fr" style="left:0;top:0;width:1439px;height:1.1px;background:#000"></div>
<div class="fr" style="left:0;top:0;width:1.1px;height:681px;background:#000"></div>
<div class="fr" style="left:1436.1px;top:0;width:2.9px;height:681px;background:#000"></div>
<div class="fr" style="left:0;top:677px;width:1439px;height:4px;background:#000"></div>
</div>
</body>
</html>
